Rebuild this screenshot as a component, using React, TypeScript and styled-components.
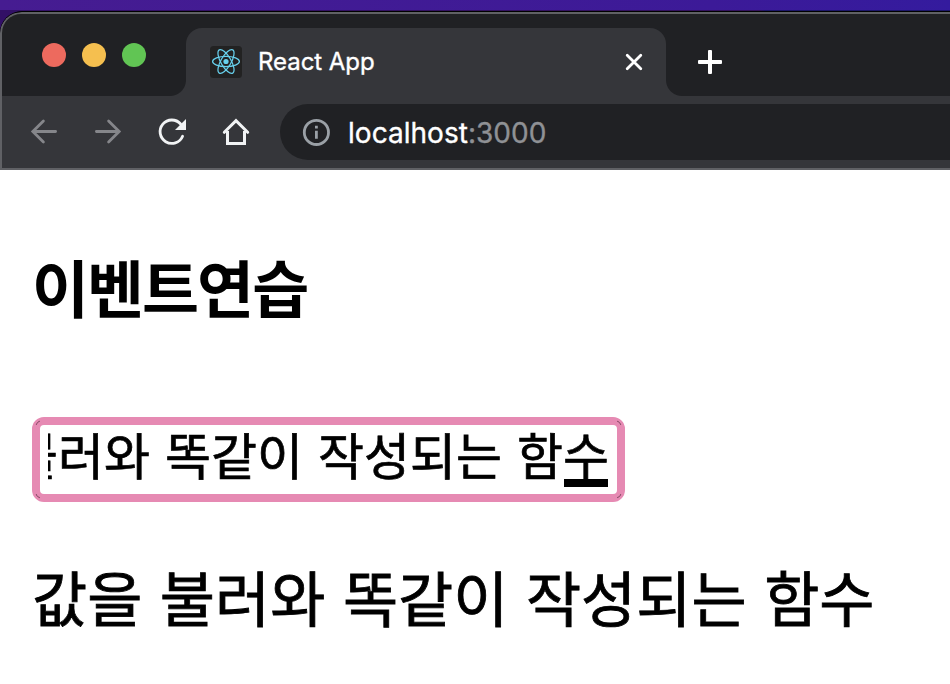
import React from "react";
import styled, { createGlobalStyle } from "styled-components";

const GlobalStyle = createGlobalStyle`
  * { box-sizing: border-box; }
  body { margin: 0; background: #fff; overflow: hidden; }
`;

const Desktop = styled.div`
  width: 950px;
  height: 684px;
  padding-top: 10px;
  overflow: hidden;
  background: linear-gradient(90deg, #461c91, #3c1a98 75%, #341b9e);
`;

const Backdrop = styled.div`
  padding-top: 1px;
  background: linear-gradient(90deg, #321066 0, #32125c 760px, #1c1668 765px);
`;

const BrowserWindow = styled.div`
  height: 673px;
  border-top: 1px solid #000;
  border-top-left-radius: 22px;
  background: #000;
  overflow: hidden;
`;

const Chrome = styled.div`
  height: 158px;
  border: 2px solid #606165;
  border-right: 0;
  border-top-left-radius: 21px;
  background: #202124;
  overflow: hidden;
`;

const TabStrip = styled.div`
  display: flex;
  height: 82px;
  padding-top: 14px;
`;

const TrafficLights = styled.div`
  display: flex;
  gap: 16px;
  width: 184px;
  padding: 15px 0 0 40px;
`;

const Light = styled.span<{ $color: string }>`
  width: 24px;
  height: 24px;
  border-radius: 50%;
  background: ${(p) => p.$color};
`;

const Tab = styled.div`
  position: relative;
  display: flex;
  align-items: center;
  width: 480px;
  height: 68px;
  padding: 0 22px 0 24px;
  border-radius: 16px 16px 0 0;
  background: #35363a;

  &::before,
  &::after {
    content: "";
    position: absolute;
    bottom: 0;
    width: 16px;
    height: 16px;
  }
  &::before {
    left: -16px;
    background: radial-gradient(circle at 0 0, #202124 15.5px, #35363a 16.5px);
  }
  &::after {
    right: -16px;
    background: radial-gradient(circle at 100% 0, #202124 15.5px, #35363a 16.5px);
  }
`;

const TabTitle = styled.span`
  flex: 1;
  margin-left: 16px;
  font: 400 24px/32px Inter, sans-serif;
  letter-spacing: -0.05px;
  -webkit-text-stroke: 0.35px #fff;
  color: #fff;
  white-space: nowrap;
`;

const NewTab = styled.div`
  display: flex;
  align-items: center;
  height: 68px;
  margin-left: 32px;
`;

const Toolbar = styled.div`
  display: flex;
  align-items: center;
  height: 72px;
  padding-left: 26px;
  background: #35363a;
`;

const NavButton = styled.span`
  display: flex;
  width: 64px;
  svg { display: block; }
`;

const AddressBar = styled.div`
  display: flex;
  align-items: center;
  flex: 1;
  height: 56px;
  margin-left: -4px;
  padding-left: 22px;
  border-radius: 28px 0 0 28px;
  background: #202124;
`;

const Url = styled.span`
  margin: 1px 0 0 18px;
  font: 400 28px/40px Inter, sans-serif;
  letter-spacing: 0.03px;
  -webkit-text-stroke: 0.35px;
  color: #fff;
  white-space: nowrap;
`;

const Port = styled.span`
  color: #8f9195;
`;

const Page = styled.main`
  height: 514px;
  padding: 76px 0 0 32px;
  background: #fff;
  color: #000;
  font-family: "Noto Sans CJK KR", sans-serif;
`;

const Heading = styled.h1`
  margin: 0;
  font-size: 62px;
  line-height: 80px;
  font-weight: 700;
  letter-spacing: -2px;
  white-space: nowrap;
`;

const TextField = styled.div`
  position: relative;
  display: flex;
  width: 593px;
  height: 85px;
  margin-top: 91px;
  padding: 0 8px;
  border: 8px solid #e68ab3;
  border-radius: 12px;
`;

const CornerMark = styled.span<{ $turn: number }>`
  position: absolute;
  ${(p) => (p.$turn === 0 || p.$turn === 3 ? "left: -4px;" : "right: -4px;")}
  ${(p) => (p.$turn < 2 ? "top: -4px;" : "bottom: -4px;")}
  width: 8px;
  height: 8px;
  border-radius: 4px;
  border: 1px solid transparent;
  border-top-color: #8e4f6c;
  transform: rotate(${(p) => p.$turn * 90 - 45}deg);
`;

const TextClip = styled.div`
  display: flex;
  justify-content: flex-end;
  width: 561px;
  height: 69px;
  overflow: hidden;
`;

const FieldValue = styled.span`
  flex: none;
  font-size: 50px;
  line-height: 56px;
  word-spacing: 3.8px;
  -webkit-text-stroke: 0.7px #000;
  white-space: nowrap;
`;

const Composing = styled.span`
  display: inline-block;
  height: 62px;
  background: linear-gradient(#000, #000) 1px 100% / 44px 8px no-repeat;
`;

const Result = styled.p`
  margin: 54px 0 0;
  font-size: 60px;
  line-height: 80px;
  word-spacing: 4px;
  -webkit-text-stroke: 0.8px #000;
  white-space: nowrap;
`;

const ReactIcon = () => (
  <svg width="32" height="32" viewBox="0 0 32 32" fill="none">
    <rect width="32" height="32" rx="3.5" fill="#222" />
    <g stroke="#67d0ec" strokeWidth="1.25">
      {[0, 60, 120].map((angle) => (
        <ellipse key={angle} cx="16" cy="15.5" rx="13.4" ry="5.1" transform={`rotate(${angle} 16 15.5)`} />
      ))}
    </g>
    <circle cx="16" cy="15.5" r="2.6" fill="#67d0ec" />
  </svg>
);

const CloseIcon = () => (
  <svg width="20" height="20" viewBox="0 0 20 20" stroke="#fff" strokeWidth="2.8" strokeLinecap="round">
    <path d="M3.2 3.2 16.8 16.8M16.8 3.2 3.2 16.8" />
  </svg>
);

const PlusIcon = () => (
  <svg width="24" height="24" viewBox="0 0 24 24" fill="#fff">
    <rect x="10" width="4" height="24" rx="1" />
    <rect y="10" width="24" height="4" rx="1" />
  </svg>
);

const ArrowIcon = ({ forward = false }: { forward?: boolean }) => (
  <svg width="32" height="32" viewBox="0 0 32 32" fill="none" stroke="#85868a" strokeWidth="2.8" strokeLinecap="round">
    {forward ? <path d="M4.4 15.5h22.6M16.6 4.9l10.6 10.6-10.6 10.6" /> : <path d="M27.6 15.5h-22.6M15.4 4.9 4.8 15.5l10.6 10.6" />}
  </svg>
);

const ReloadIcon = () => (
  <svg width="32" height="32" viewBox="0 0 32 32" fill="none">
    <path d="M26.6 20.2A11.7 11.7 0 1 1 24.6 8" stroke="#f1f3f4" strokeWidth="2.8" strokeLinecap="round" />
    <path d="M30 3v11H19z" fill="#f1f3f4" />
  </svg>
);

const HomeIcon = () => (
  <svg width="32" height="32" viewBox="0 0 32 32" fill="none" stroke="#f1f3f4" strokeWidth="3">
    <path d="M7.5 15v12.5h17V15" />
    <path d="M4.3 16.3 16 4.7l11.7 11.6" strokeLinecap="round" />
  </svg>
);

const InfoIcon = () => (
  <svg width="28" height="28" viewBox="0 0 28 28" fill="none">
    <circle cx="14.4" cy="14.4" r="12.1" stroke="#9aa0a6" strokeWidth="2.8" />
    <path d="M13 7.8h2.8v2.8H13zM13 12.8h2.8v8H13z" fill="#9aa0a6" />
  </svg>
);

export default function App() {
  return (
    <Desktop>
      <GlobalStyle />
      <Backdrop>
        <BrowserWindow>
          <Chrome>
            <TabStrip>
              <TrafficLights>
                <Light $color="#ed6a5e" />
                <Light $color="#f5bf4f" />
                <Light $color="#61c554" />
              </TrafficLights>
              <Tab>
                <ReactIcon />
                <TabTitle>React App</TabTitle>
                <CloseIcon />
              </Tab>
              <NewTab>
                <PlusIcon />
              </NewTab>
            </TabStrip>
            <Toolbar>
              <NavButton><ArrowIcon /></NavButton>
              <NavButton><ArrowIcon forward /></NavButton>
              <NavButton><ReloadIcon /></NavButton>
              <NavButton><HomeIcon /></NavButton>
              <AddressBar>
                <InfoIcon />
                <Url>localhost<Port>:3000</Port></Url>
              </AddressBar>
            </Toolbar>
          </Chrome>
          <Page>
            <Heading>이벤트연습</Heading>
            <TextField>
              {[0, 1, 2, 3].map((turn) => (
                <CornerMark key={turn} $turn={turn} />
              ))}
              <TextClip>
                <FieldValue>값을 불러와 똑같이 작성되는 함<Composing>수</Composing></FieldValue>
              </TextClip>
            </TextField>
            <Result>값을 불러와 똑같이 작성되는 함수</Result>
          </Page>
        </BrowserWindow>
      </Backdrop>
    </Desktop>
  );
}
